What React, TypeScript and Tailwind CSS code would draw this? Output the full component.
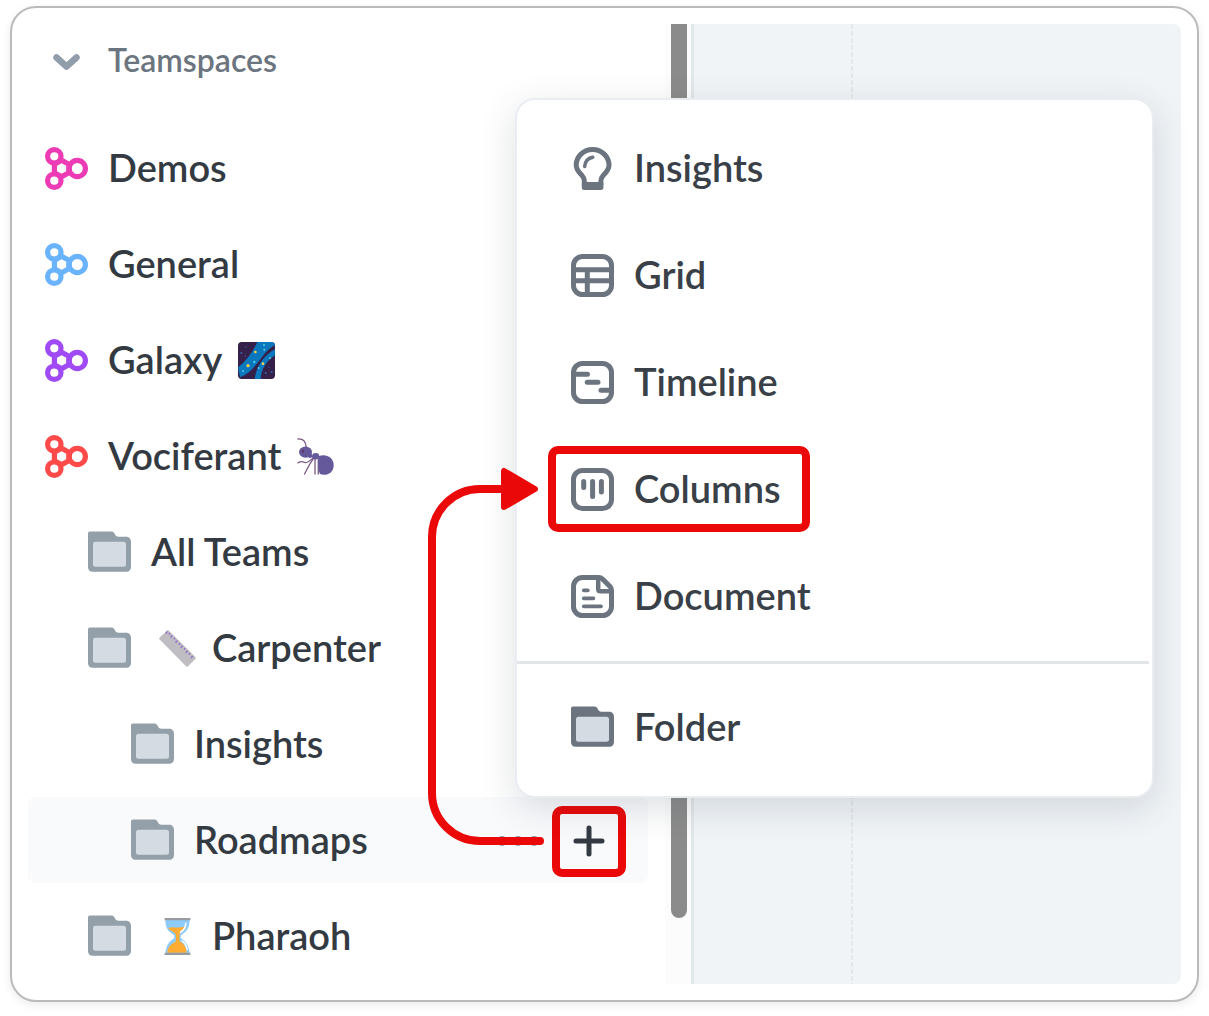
import type { ReactNode } from "react";

type IconProps = { className?: string };

const TeamIcon = ({ className }: IconProps) => (
  <svg viewBox="0 0 43 43" className={`size-[43px] shrink-0 ${className}`} fill="none" stroke="currentColor" strokeWidth="5.2">
    <circle cx="9.3" cy="9.3" r="6.7" />
    <circle cx="9.3" cy="33.7" r="6.7" />
    <circle cx="32.3" cy="21.5" r="8.1" />
    <path d="M16.6 13.2l7.200 4.150v8.300l-7.200 4.150-7.200-4.150v-8.300z" />
  </svg>
);

const FolderIcon = ({ className }: IconProps) => (
  <svg viewBox="0 1 43 43" className={`size-[43px] shrink-0 ${className}`}>
    <path
      fill="currentColor"
      d="M2 1.5h21.5c2 0 2.6 1.2 3.4 2.8.8 1.6 1.6 2.4 3.4 2.4H38c3 0 5 2 5 5V37c0 3-2 4.7-4.500 4.700h-34C1.800 41.700 0 39.800 0 37.200V3.500c0-1.200.8-2 2-2z"
    />
    <rect x="5" y="11.7" width="33" height="25" rx="2.5" fill="#d4dbe2" />
  </svg>
);

const MenuIcon = ({ children }: { children: ReactNode }) => (
  <svg
    viewBox="0 0 43 43"
    className="size-[43px] shrink-0 text-[#6b747f]"
    fill="none"
    stroke="currentColor"
    strokeWidth="5"
    strokeLinecap="round"
    strokeLinejoin="round"
  >
    {children}
  </svg>
);

const InsightsIcon = () => (
  <MenuIcon>
    <path d="M13.300 37v-3.500c0-2-.7-3.200-2.200-4.900C7.500 25 5.200 22 5.200 18.200a16.400 15.700 0 0 1 32.800 0c0 3.800-2.300 6.800-5.900 10.400-1.500 1.700-2.200 2.900-2.200 4.900V37" />
    <path d="M13.300 37.500v3h16.600v-3z" fill="currentColor" />
    <path d="M13.700 19.500c.3-5 3-8.300 8-9.300" strokeWidth="3.6" />
  </MenuIcon>
);

const GridIcon = () => (
  <MenuIcon>
    <rect x="2.5" y="2.5" width="38" height="38" rx="9" />
    <path d="M3 15.700h37M3 26.700h37M16.300 16v24" />
  </MenuIcon>
);

const TimelineIcon = () => (
  <MenuIcon>
    <rect x="2.5" y="2.5" width="38" height="38" rx="9" />
    <path d="M4 13.300h12.500M16.200 21.300h10.800M30 29.300h10" />
  </MenuIcon>
);

const ColumnsIcon = () => (
  <MenuIcon>
    <rect x="2.5" y="2.5" width="38" height="38" rx="9" />
    <path d="M12.700 13.500v6M21.600 13.500v15M30.400 13.500v10.500" />
  </MenuIcon>
);

const DocumentIcon = () => (
  <MenuIcon>
    <path d="M11.500 2.500h16.200c1.500 0 2.700.5 3.800 1.500l7.500 7.600c1 1 1.500 2.300 1.500 3.700v16.200c0 5-4 9-9 9h-20c-5 0-9-4-9-9v-20c0-5 4-9 9-9z" />
    <path d="M27.200 4v10c0 1.500.8 2.300 2.300 2.300h9.500" strokeWidth="4.5" />
    <path d="M12.800 15.300h4M12.800 23.300h9.600M12.800 31.300h17.200" strokeWidth="3.8" />
  </MenuIcon>
);

const GalaxyEmoji = () => (
  <svg viewBox="0 0 111 111" className="size-[37px] shrink-0">
    <clipPath id="galaxy">
      <rect width="111" height="111" rx="11" />
    </clipPath>
    <g clipPath="url(#galaxy)">
      <rect width="111" height="111" fill="#35204a" />
      <path d="M58 0h53v10C86 22 76 42 58 64 42 84 26 98 6 106L0 76C20 62 44 32 58 0z" fill="#0b77bd" />
      <path d="M111 22C84 36 56 66 50 111h18c2-32 20-56 43-71z" fill="#0b77bd" />
      <g fill="#ffd04f">
        <circle cx="52" cy="30" r="4" />
        <circle cx="30" cy="71" r="5" />
        <circle cx="75" cy="65" r="4" />
      </g>
      <g fill="#4fd0e8">
        <circle cx="78" cy="9" r="3" />
        <circle cx="79" cy="23" r="3" />
        <circle cx="49" cy="60" r="3.5" />
        <circle cx="15" cy="87" r="3" />
        <circle cx="96" cy="48" r="3" />
        <circle cx="62" cy="78" r="3" />
      </g>
      <g fill="#3b63a8">
        <circle cx="10" cy="33" r="3" />
        <circle cx="24" cy="15" r="2" />
        <circle cx="22" cy="42" r="2" />
        <circle cx="83" cy="93" r="3" />
        <circle cx="101" cy="90" r="3" />
        <circle cx="93" cy="76" r="2" />
      </g>
    </g>
  </svg>
);

const AntEmoji = () => (
  <svg viewBox="0 0 113 113" className="size-[37px] shrink-0">
    <g fill="none" stroke="#7b5a83" strokeWidth="4" strokeLinecap="round" strokeLinejoin="round">
      <path d="M3 3c12-1 23 6 25 24" />
      <path d="M3 76c9-6 14-5 19-2s14 0 28-14" />
      <path d="M50 63L40 78 23 110M55 62v48M65 66v44" />
    </g>
    <ellipse cx="26" cy="43" rx="20" ry="17" fill="#66599b" />
    <circle cx="40" cy="54" r="7" fill="#66599b" />
    <ellipse cx="57" cy="56" rx="11" ry="10" fill="#66599b" />
    <path d="M66 56c20-9 46 2 46 27s-24 34-42 27c-6-14-8-40-4-54z" fill="#66599b" />
    <ellipse cx="18" cy="40" rx="3" ry="5" fill="#5a3357" />
  </svg>
);

const RulerEmoji = () => (
  <svg viewBox="0 0 112 112" className="size-[37px] shrink-0">
    <path d="M30 2l80 80c2 2 2 4 0 6l-22 22c-2 2-4 2-6 0L2 29c-2-2-2-4 0-6L24 2c2-2 4-2 6 0z" fill="#bfbdc1" />
    <path
      d="M25 4l-4 7M33 9l-3 4M40 16l-5 7M48 24l-3 4M56 32l-6 6M64 40l-4 4M71 47l-5 7M79 55l-3 4M87 63l-6 6M94 70l-4 4M102 78l-5 7"
      stroke="#9268ca"
      strokeWidth="4"
    />
  </svg>
);

const HourglassEmoji = () => (
  <svg viewBox="0 0 112 112" className="size-[37px] shrink-0">
    <path d="M19 5h74c0 27-12 38-27 47v9c15 9 25 21 27 47H19c2-26 12-38 27-47v-9C31 43 19 32 19 5z" fill="#8ccbfa" />
    <path d="M28 31c8-5 18-3 26-2s18-4 28 0c-5 11-20 13-20 24v18c14 6 21 18 22 34H25c1-16 10-27 26-34V53c0-11-17-12-23-22z" fill="#ffac33" />
    <path d="M81 16c0 12-5 20-16 27M70 70c8 5 13 13 15 25" stroke="#fff" strokeWidth="5" fill="none" strokeLinecap="round" />
    <path d="M17 0h78v7H17zM17 105h78v7H17z" fill="#979ba0" />
  </svg>
);

type TreeRow = {
  label: string;
  icon: ReactNode;
  indent: string;
  before?: ReactNode;
  after?: ReactNode;
};

const folder = <FolderIcon className="text-[#939fa9]" />;

const rows: TreeRow[] = [
  { label: "Demos", icon: <TeamIcon className="text-[#ec3bb4]" />, indent: "pl-[17px]" },
  { label: "General", icon: <TeamIcon className="text-[#69b3ff]" />, indent: "pl-[17px]" },
  { label: "Galaxy", icon: <TeamIcon className="text-[#9f4af5]" />, indent: "pl-[17px]", after: <GalaxyEmoji /> },
  { label: "Vociferant", icon: <TeamIcon className="text-[#ff4a4a]" />, indent: "pl-[17px]", after: <AntEmoji /> },
  { label: "All Teams", icon: folder, indent: "pl-[60px]" },
  { label: "Carpenter", icon: folder, indent: "pl-[60px]", before: <RulerEmoji /> },
  { label: "Insights", icon: folder, indent: "pl-[103px]" },
  { label: "Roadmaps", icon: folder, indent: "pl-[103px]" },
  { label: "Pharaoh", icon: folder, indent: "pl-[60px]", before: <HourglassEmoji /> },
];

const menuItems = [
  { label: "Insights", icon: <InsightsIcon /> },
  { label: "Grid", icon: <GridIcon /> },
  { label: "Timeline", icon: <TimelineIcon /> },
  { label: "Columns", icon: <ColumnsIcon /> },
  { label: "Document", icon: <DocumentIcon /> },
];

const Row = ({ row }: { row: TreeRow }) => {
  const active = row.label === "Roadmaps";

  return (
    <li className={`flex h-[86px] items-center rounded-lg ${active ? "bg-[#f9fafc]" : ""}`}>
      <button type="button" className={`flex flex-1 items-center gap-5 ${row.indent}`}>
        {row.icon}
        <span className="flex items-center gap-4">
          {row.before && <span className="pl-2">{row.before}</span>}
          <span className="pb-[2px]">{row.label}</span>
          {row.after}
        </span>
      </button>
      {active && (
        <div className="flex items-center gap-2 pt-[2px] pr-[22px]">
          <button type="button" aria-label="More" className="text-[#8f9baa]">
            <svg viewBox="0 0 50 12" className="h-3 w-[50px]" fill="currentColor">
              <circle cx="8" cy="6" r="5" />
              <circle cx="24" cy="6" r="5" />
              <circle cx="40" cy="6" r="5" />
            </svg>
          </button>
          <button
            type="button"
            aria-label="Add"
            className="flex h-[71px] w-[74px] items-center justify-center rounded-[10px] border-8 border-[#ea0808] text-[#343a42]"
          >
            <svg viewBox="0 0 32 32" className="size-8" stroke="currentColor" strokeWidth="5" strokeLinecap="round">
              <path d="M16 3v26M3 16h26" />
            </svg>
          </button>
        </div>
      )}
    </li>
  );
};

const Sidebar = () => (
  <nav className="w-[620px] shrink-0">
    <button type="button" className="flex h-[74px] w-full items-center gap-5 pl-[17px] text-[32px] text-[#6b7580]">
      <svg viewBox="0 0 43 43" className="size-[43px] text-[#919dab]" fill="none" stroke="currentColor" strokeWidth="6.5" strokeLinecap="round" strokeLinejoin="round">
        <path d="M11.500 17.500l10 9 10-9" />
      </svg>
      <span className="pb-[2px]">Teamspaces</span>
    </button>
    <ul className="mt-[27px] flex flex-col gap-[10px]">
      {rows.map((row) => (
        <Row key={row.label} row={row} />
      ))}
    </ul>
  </nav>
);

const AddMenu = () => (
  <div className="absolute top-[74px] left-[487px] w-[639px] rounded-[20px] border-2 border-[#e9edf1] bg-white py-[15px] text-[#394047] shadow-[0_10px_36px_rgba(50,65,75,0.16)]">
    {menuItems.map((item) => (
      <button key={item.label} type="button" className="relative flex h-[107px] w-full items-center gap-5 pl-[54px]">
        {item.icon}
        <span className="pb-1">{item.label}</span>
        {item.label === "Columns" && (
          <span className="absolute top-[10px] left-[31px] h-[86px] w-[262px] rounded-[10px] border-8 border-[#ea0808]" />
        )}
      </button>
    ))}
    <hr className="mt-[11px] mr-[3px] mb-[10px] border-t-[3px] border-[#e2e6eb]" />
    <button type="button" className="flex h-[107px] w-full items-center gap-5 pl-[54px]">
      <FolderIcon className="text-[#6b747f]" />
      <span className="pb-1">Folder</span>
    </button>
  </div>
);

// Runs from the add button up to the Columns entry
const Arrow = () => (
  <svg viewBox="0 0 120 386" className="pointer-events-none absolute top-[440px] left-[396px] h-[386px] w-[120px]" fill="none">
    <path d="M116 377H56C30 377 8 356 8 329V73C8 46 30 25 56 25H82" stroke="#ea0808" strokeWidth="8" strokeLinecap="round" />
    <path d="M80 7v36l31-18z" fill="#ea0808" stroke="#ea0808" strokeWidth="6" strokeLinejoin="round" />
  </svg>
);

export default function App() {
  return (
    <div className="bg-white px-[10px] pt-[6px] pb-[14px] font-[Lato,sans-serif] text-[38px] leading-[44px] font-semibold text-[#333a42]">
      <main className="rounded-[26px] border-2 border-[#bbb] p-4 shadow-[0_3px_10px_rgba(0,0,0,0.08)]">
        <div className="relative flex h-[960px]">
          <Sidebar />
          <div className="ml-[17px] flex w-[26px] shrink-0 justify-end bg-[#fcfcfc] pr-1">
            <div className="h-[894px] w-4 rounded-b-full bg-[#8b8b8b]" />
          </div>
          <div className="flex flex-1 rounded-r-lg border-l-[3px] border-[#e2e7ea] bg-[#f0f4f7]">
            <div className="ml-[157px] w-[2px] bg-[repeating-linear-gradient(#e4e8eb_0_5px,transparent_5px_7px)]" />
          </div>
          <AddMenu />
          <Arrow />
        </div>
      </main>
    </div>
  );
}
